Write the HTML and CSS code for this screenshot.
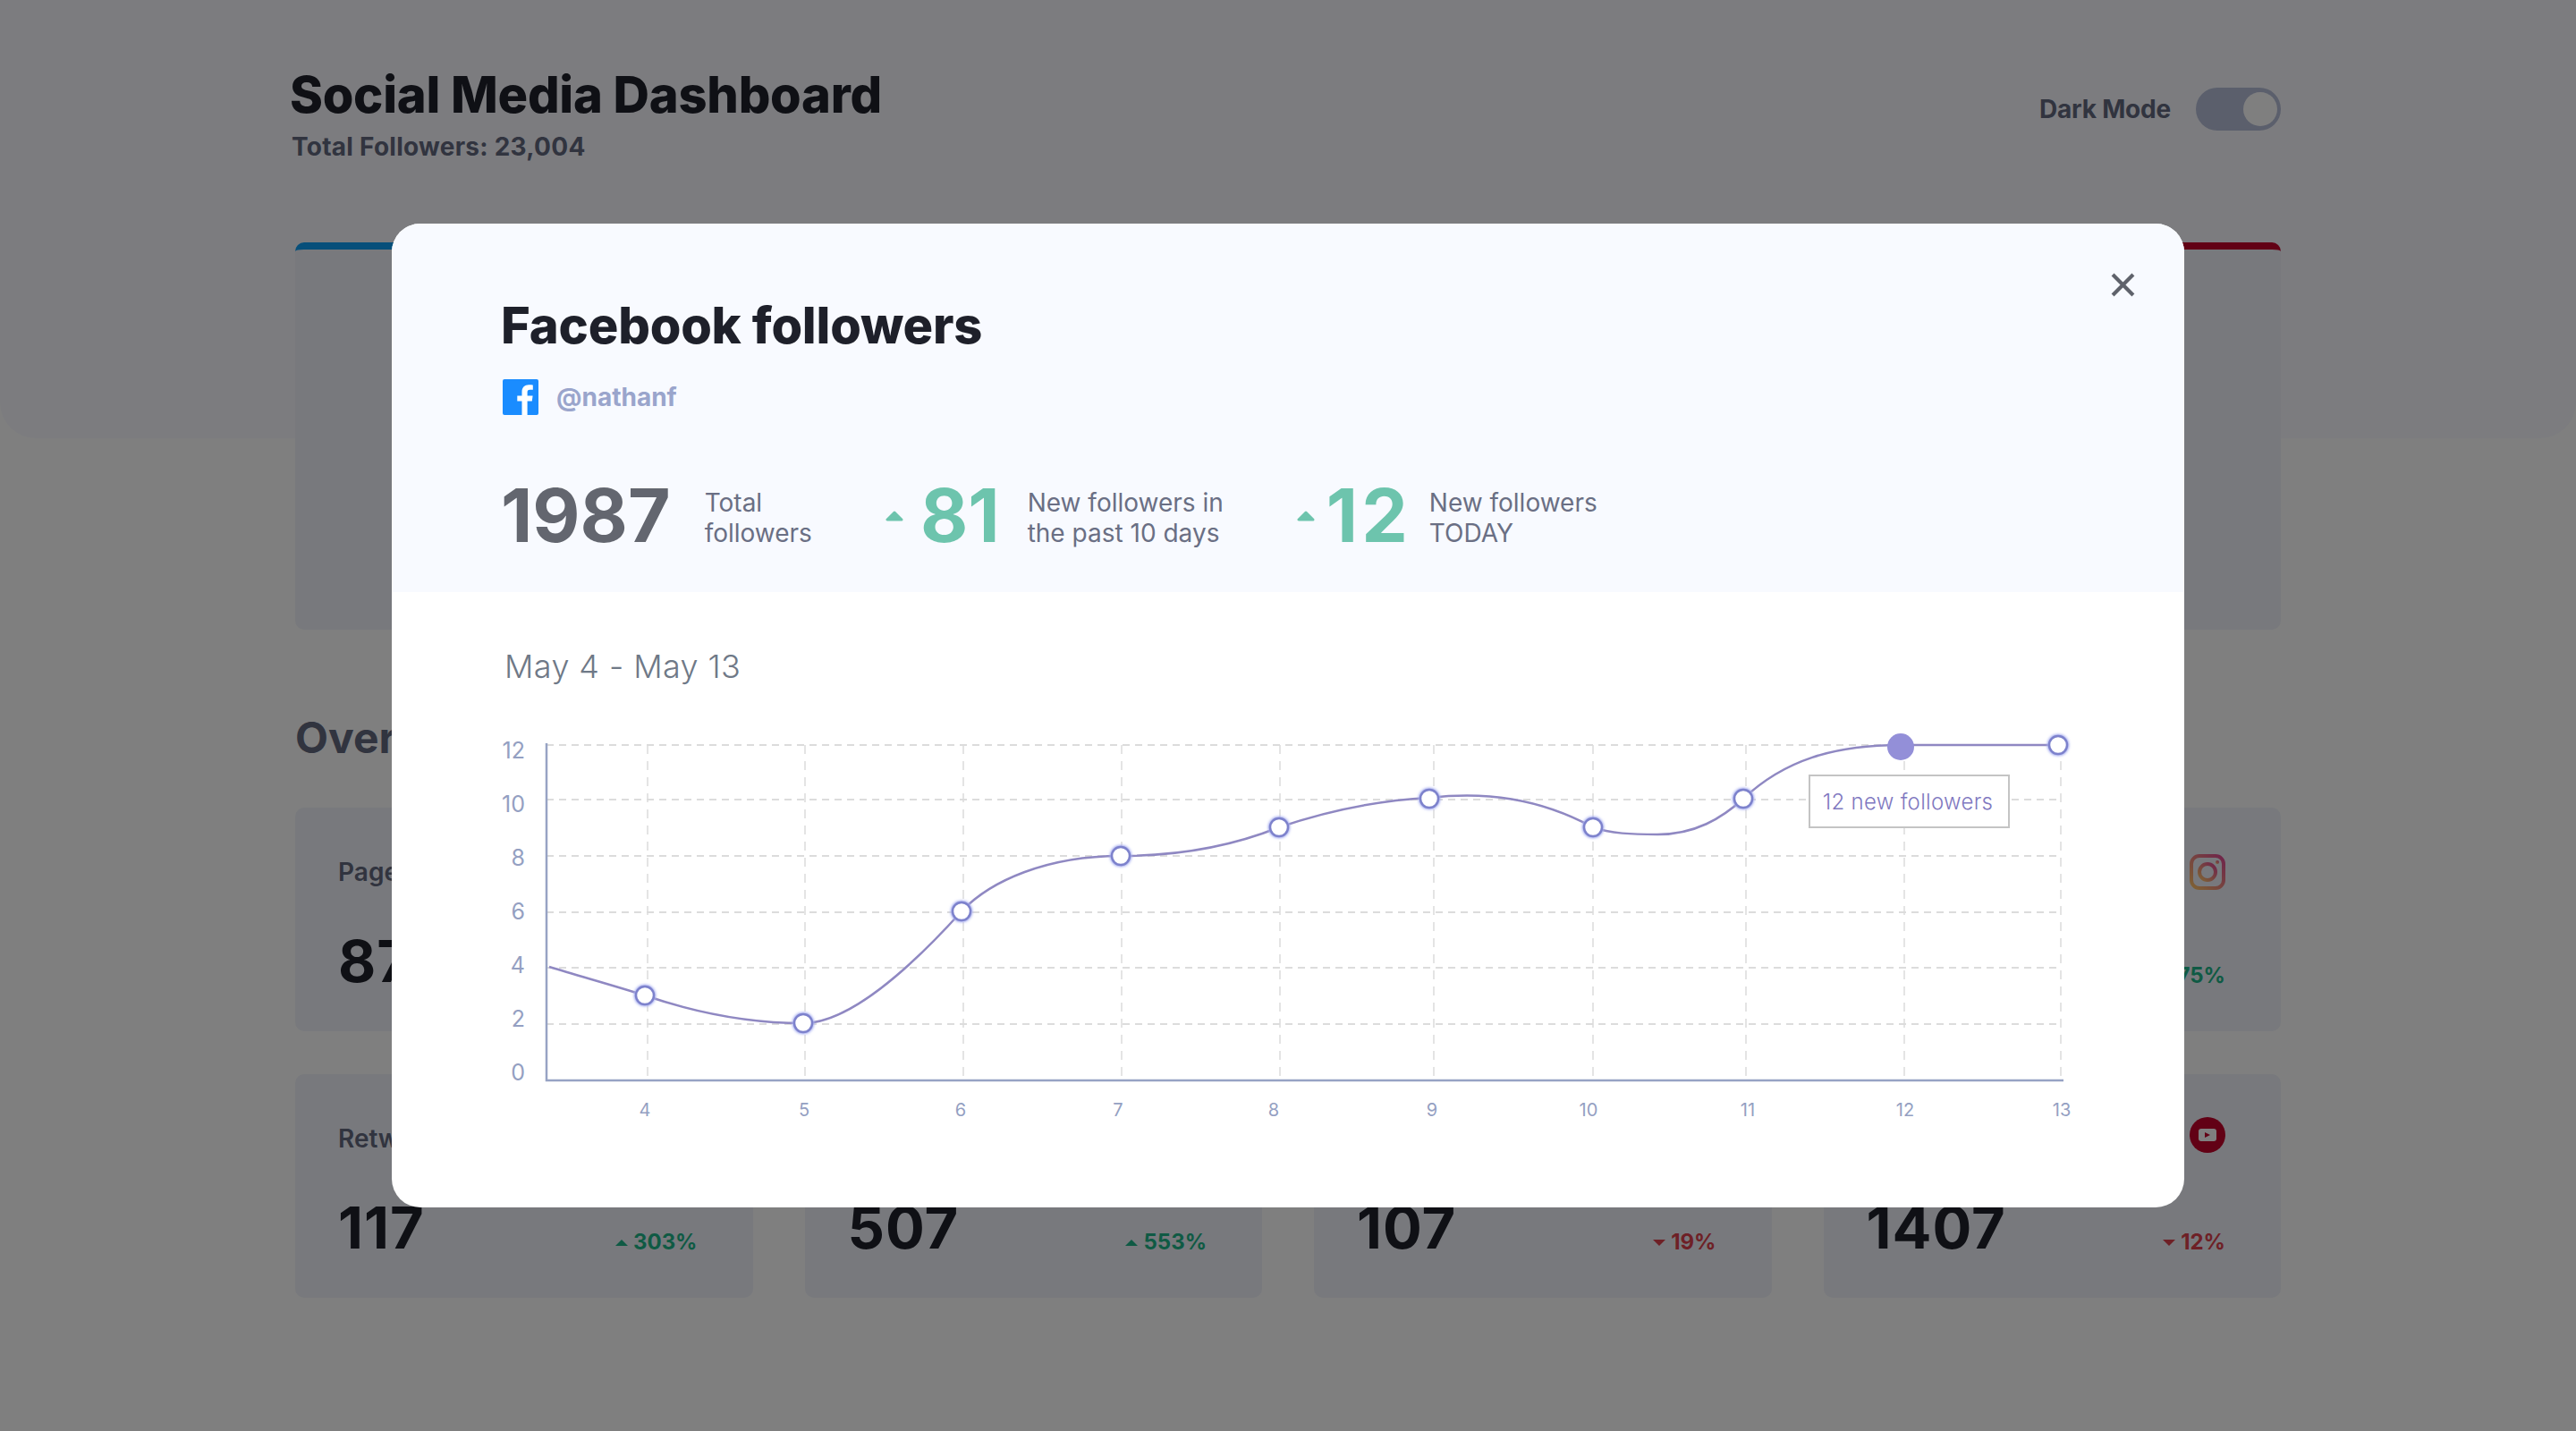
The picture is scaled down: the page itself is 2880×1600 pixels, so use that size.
FILE: index.html
```html
<!DOCTYPE html>
<html lang="en">
<head>
  <meta charset="UTF-8">
  <title>Social Media Dashboard</title>
  <link rel="stylesheet" href="styles.css">
</head>
<body>
  <div class="page">
    <header class="header">
      <div>
        <h1>Social Media Dashboard</h1>
        <p class="total">Total Followers: 23,004</p>
      </div>
      <div class="mode">
        <span>Dark Mode</span>
        <div class="toggle"><div class="knob"></div></div>
      </div>
    </header>

    <div class="top-cards">
      <div class="top-card bar-facebook"></div>
      <div class="top-card bar-twitter"></div>
      <div class="top-card bar-instagram"></div>
      <div class="top-card bar-youtube"></div>
    </div>

    <h2 class="overview">Overview</h2>

    <div class="cards">
      <div class="card">
        <div class="card-row"><span class="label">Page Views</span></div>
        <div class="card-row"><span class="value">87</span><span class="pct up">3%</span></div>
      </div>
      <div class="card">
        <div class="card-row"><span class="label">Likes</span></div>
        <div class="card-row"><span class="value">52</span><span class="pct down">2%</span></div>
      </div>
      <div class="card">
        <div class="card-row"><span class="label">Likes</span></div>
        <div class="card-row"><span class="value">5462</span><span class="pct up">2257%</span></div>
      </div>
      <div class="card">
        <div class="card-row">
          <span class="label">Profile Views</span>
          <svg class="icon" viewBox="0 0 40 40">
            <defs>
              <linearGradient id="ig" x1="0" y1="1" x2="1" y2="0">
                <stop offset="0" stop-color="#fdc468"/>
                <stop offset="1" stop-color="#df4996"/>
              </linearGradient>
            </defs>
            <rect x="2" y="2" width="36" height="36" rx="9" fill="none" stroke="url(#ig)" stroke-width="4"/>
            <circle cx="20" cy="20" r="9" fill="none" stroke="url(#ig)" stroke-width="4"/>
            <circle cx="31" cy="9" r="2" fill="url(#ig)"/>
          </svg>
        </div>
        <div class="card-row"><span class="value">52k</span><span class="pct up">1375%</span></div>
      </div>
      <div class="card">
        <div class="card-row"><span class="label">Retweets</span></div>
        <div class="card-row"><span class="value">117</span><span class="pct up">303%</span></div>
      </div>
      <div class="card">
        <div class="card-row"><span class="label">Likes</span></div>
        <div class="card-row"><span class="value">507</span><span class="pct up">553%</span></div>
      </div>
      <div class="card">
        <div class="card-row"><span class="label">Likes</span></div>
        <div class="card-row"><span class="value">107</span><span class="pct down">19%</span></div>
      </div>
      <div class="card">
        <div class="card-row">
          <span class="label">Total Views</span>
          <svg class="icon icon-yt" viewBox="0 0 40 40">
            <circle cx="20" cy="20" r="20" fill="#c4032b"/>
            <rect x="10" y="13" width="20" height="14" rx="3" fill="#fff"/>
            <path d="M17 17l6 3-6 3z" fill="#c4032b"/>
          </svg>
        </div>
        <div class="card-row"><span class="value">1407</span><span class="pct down">12%</span></div>
      </div>
    </div>
  </div>

  <div class="overlay">
    <div class="modal">
      <svg class="close" viewBox="0 0 26 26">
        <path d="M2 2l22 22M24 2L2 24"/>
      </svg>

      <div class="modal-head">
        <h2 class="modal-title">Facebook followers</h2>
        <div class="handle">
          <svg class="fb" viewBox="0 0 40 40">
            <rect width="40" height="40" rx="2" fill="#1a8cff"/>
            <path fill="#fff" d="M27.6 40V24.5h5.2l.8-6h-6v-3.8c0-1.7.5-2.9 3-2.9h3.2V6.4c-.6-.1-2.4-.2-4.6-.2-4.6 0-7.7 2.8-7.7 7.9v4.4h-5.2v6h5.2V40z"/>
          </svg>
          <span>@nathanf</span>
        </div>
        <div class="stats">
          <div class="stat stat-total">
            <span class="num num-total">1987</span>
            <span class="stat-text">Total<br>followers</span>
          </div>
          <div class="stat stat-month">
            <svg class="tri" viewBox="0 0 20 12"><path d="M10 2L2 10h16z"/></svg>
            <span class="num">81</span>
            <span class="stat-text">New followers in<br>the past 10 days</span>
          </div>
          <div class="stat stat-today">
            <svg class="tri" viewBox="0 0 20 12"><path d="M10 2L2 10h16z"/></svg>
            <span class="num">12</span>
            <span class="stat-text">New followers<br>TODAY</span>
          </div>
        </div>
      </div>

      <div class="modal-body">
        <div class="range">May 4 - May 13</div>
        <svg class="chart" viewBox="520 810 1820 460" width="1820" height="460">
          <g class="grid-v">
            <path d="M724 833V1208M900 833V1208M1077 833V1208M1254 833V1208M1431 833V1208M1603 833V1208M1781 833V1208M1952 833V1208M2129 833V1208M2304 833V1208"/>
          </g>
          <g class="grid-h">
            <path d="M611 833H2304M611 894H2304M611 957H2304M611 1020H2304M611 1082H2304M611 1145H2304"/>
          </g>
          <path class="axis" d="M611 831V1208H2307"/>

          <g class="y-labels">
            <text x="587" y="848">12</text>
            <text x="587" y="908">10</text>
            <text x="587" y="968">8</text>
            <text x="587" y="1028">6</text>
            <text x="587" y="1088">4</text>
            <text x="587" y="1148">2</text>
            <text x="587" y="1208">0</text>
          </g>
          <g class="x-labels">
            <text x="721" y="1248">4</text>
            <text x="899" y="1248">5</text>
            <text x="1074" y="1248">6</text>
            <text x="1250" y="1248">7</text>
            <text x="1424" y="1248">8</text>
            <text x="1601" y="1248">9</text>
            <text x="1776" y="1248">10</text>
            <text x="1954" y="1248">11</text>
            <text x="2130" y="1248">12</text>
            <text x="2305" y="1248">13</text>
          </g>

          <path class="line" d="M614 1081C650 1092 690 1103 721 1113C780 1133 840 1144 898 1144C950 1144 1020 1080 1075 1019C1107 985 1170 957 1253 957C1320 957 1380 945 1430 925C1480 908 1540 895 1598 892C1660 885 1720 892 1781 925C1800 932 1825 933 1853 933C1895 933 1925 915 1949 893C1995 850 2050 833 2125 833H2301"/>

          <g class="points">
            <circle cx="721" cy="1113" r="10"/>
            <circle cx="898" cy="1144" r="10"/>
            <circle cx="1075" cy="1019" r="10"/>
            <circle cx="1253" cy="957" r="10"/>
            <circle cx="1430" cy="925" r="10"/>
            <circle cx="1598" cy="893" r="10"/>
            <circle cx="1781" cy="925" r="10"/>
            <circle cx="1949" cy="893" r="10"/>
            <circle cx="2301" cy="833" r="10"/>
          </g>
          <circle class="point-active" cx="2125" cy="835" r="15"/>

          <rect class="tip-box" x="2023" y="867" width="223" height="58"/>
          <text class="tip-text" x="2133" y="905">12 new followers</text>
        </svg>
      </div>
    </div>
  </div>
</body>
</html>
```
FILE: styles.css
```css
* {
  box-sizing: border-box;
}

html, body {
  height: 100%;
}

body {
  margin: 0;
  font-family: Inter, "Liberation Sans", sans-serif;
  background: #fff;
  color: #63687e;
  overflow: hidden;
}

h1, h2, p {
  margin: 0;
}

/* dashboard behind the modal */
.page {
  position: relative;
  height: 1600px;
  padding: 0 330px;
}

.page::before {
  content: "";
  position: absolute;
  top: 0;
  left: 0;
  right: 0;
  height: 490px;
  background: #f8f9fe;
  border-radius: 0 0 40px 40px;
}

.header, .top-cards, .overview, .cards {
  position: relative;
}

.header {
  display: flex;
  justify-content: space-between;
  margin-left: -6px;
  padding-top: 72px;
  height: 271px;
}

h1 {
  font-size: 56px;
  line-height: 68px;
  font-weight: 800;
  letter-spacing: -0.27px;
  color: #1e202a;
}

.total {
  margin-top: 7px;
  margin-left: 2px;
  font-size: 28px;
  line-height: 34px;
  font-weight: 700;
  letter-spacing: 0.25px;
}

.mode {
  display: flex;
  align-items: center;
  gap: 28px;
  height: 48px;
  margin-top: 26px;
  font-size: 28px;
  font-weight: 700;
  letter-spacing: -0.2px;
}

.toggle {
  display: flex;
  justify-content: flex-end;
  align-items: center;
  width: 95px;
  height: 48px;
  padding-right: 4px;
  border-radius: 24px;
  background: #b6bed8;
}

.knob {
  width: 38px;
  height: 38px;
  border-radius: 50%;
  background: #fff;
}

.top-cards, .cards {
  display: grid;
  grid-template-columns: repeat(4, 1fr);
  column-gap: 58px;
}

.top-card {
  height: 433px;
  background: #f0f3fa;
  border-radius: 10px;
  border-top: 8px solid;
}

.bar-facebook { border-top-color: #0f9ff5; }
.bar-twitter { border-top-color: #1ca0f2; }
.bar-instagram { border-top-color: #df4996; }
.bar-youtube { border-top-color: #c4032b; }

.overview {
  margin-top: 92px;
  height: 58px;
  font-size: 48px;
  line-height: 58px;
  font-weight: 700;
}

.cards {
  margin-top: 49px;
  row-gap: 48px;
}

.card {
  height: 250px;
  padding: 0 62px 0 48px;
  background: #f0f3fa;
  border-radius: 10px;
}

.card-row {
  display: flex;
  justify-content: space-between;
}

.card-row:first-child {
  align-items: center;
  height: 72px;
  margin-top: 36px;
}

.card-row:last-child {
  align-items: flex-end;
  margin-top: 28px;
}

.label {
  font-size: 28px;
  font-weight: 600;
}

.icon {
  width: 40px;
  height: 40px;
}

.icon-yt {
  margin-bottom: 8px;
}

.value {
  font-size: 65px;
  line-height: 72px;
  font-weight: 700;
  letter-spacing: 1px;
  color: #1e202a;
}

.pct {
  display: flex;
  align-items: center;
  gap: 6px;
  font-size: 24px;
  line-height: 30px;
  font-weight: 700;
  margin-bottom: 5px;
}

.pct::before {
  content: "";
  border-left: 7px solid transparent;
  border-right: 7px solid transparent;
}

.up {
  color: #1eb589;
}

.up::before {
  border-bottom: 7px solid #1eb589;
}

.down {
  color: #dc414c;
}

.down::before {
  border-top: 7px solid #dc414c;
}

/* modal */
.overlay {
  position: fixed;
  inset: 0;
  display: flex;
  justify-content: center;
  align-items: center;
  background: rgba(0, 0, 0, 0.5);
}

.modal {
  position: relative;
  width: 2004px;
  height: 1100px;
  background: #fff;
  border-radius: 32px;
  overflow: hidden;
}

.close {
  position: absolute;
  top: 55px;
  right: 55px;
  width: 27px;
  height: 27px;
  fill: none;
  stroke: #5f626b;
  stroke-width: 4;
}

.modal-head {
  height: 412px;
  padding: 80px 0 0 122px;
  background: #f8faff;
}

.modal-title {
  font-size: 56px;
  line-height: 68px;
  font-weight: 800;
  letter-spacing: -0.2px;
  color: #1e202a;
}

.handle {
  display: flex;
  align-items: center;
  gap: 20px;
  margin: 26px 0 0 2px;
  font-size: 28px;
  font-weight: 700;
  color: #9aa5cc;
}

.fb {
  width: 40px;
  height: 40px;
}

.stats {
  display: flex;
  align-items: center;
  margin-top: 65px;
}

.stat {
  display: flex;
  align-items: center;
}

.stat-month {
  margin-left: 82px;
}

.stat-today {
  margin-left: 82px;
}

.tri {
  width: 20px;
  height: 12px;
  margin-right: 19px;
  fill: #6dc4ad;
  stroke: #6dc4ad;
  stroke-width: 3;
  stroke-linejoin: round;
}

.stat-today .tri {
  margin-right: 13px;
}

.num {
  font-size: 82px;
  line-height: 96px;
  font-weight: 700;
  color: #6dc4ad;
}

.num-total {
  color: #63666f;
}

.stat-today .num {
  letter-spacing: 4px;
}

.stat-text {
  margin-top: 4px;
  margin-left: 31px;
  font-size: 28px;
  line-height: 34px;
  color: #6a6f84;
}

.stat-total .stat-text {
  margin-left: 38px;
}

.stat-today .stat-text {
  margin-left: 20px;
}

.modal-body {
  padding-top: 61px;
}

.range {
  height: 44px;
  margin-bottom: 43px;
  padding-left: 126px;
  font-size: 36px;
  line-height: 44px;
  font-weight: 300;
  letter-spacing: 0.4px;
  color: #6f7987;
}

.chart {
  display: block;
  margin-left: 82px;
}

.grid-v path {
  fill: none;
  stroke: #e4e4e4;
  stroke-width: 2;
  stroke-dasharray: 10 8;
}

.grid-h path {
  fill: none;
  stroke: #dcdcdc;
  stroke-width: 2;
  stroke-dasharray: 8 6;
}

.axis {
  fill: none;
  stroke: #97a3c4;
  stroke-width: 2.5;
}

.y-labels text {
  font-size: 25px;
  fill: #94a0c2;
  text-anchor: end;
}

.x-labels text {
  font-size: 20px;
  fill: #94a0c2;
  text-anchor: middle;
}

.line {
  fill: none;
  stroke: #8f88c2;
  stroke-width: 2.5;
}

.points circle {
  fill: #fff;
  stroke: #7d82cc;
  stroke-width: 2.5;
  filter: drop-shadow(0 0 1.5px #9aa2ee) drop-shadow(0 0 1.5px #b4baf2);
}

.point-active {
  fill: #938fd8;
}

.tip-box {
  fill: #fff;
  stroke: #c4c4c4;
  stroke-width: 2;
}

.tip-text {
  font-size: 24px;
  font-weight: 300;
  letter-spacing: 0.3px;
  fill: #8078c0;
  text-anchor: middle;
}
```
